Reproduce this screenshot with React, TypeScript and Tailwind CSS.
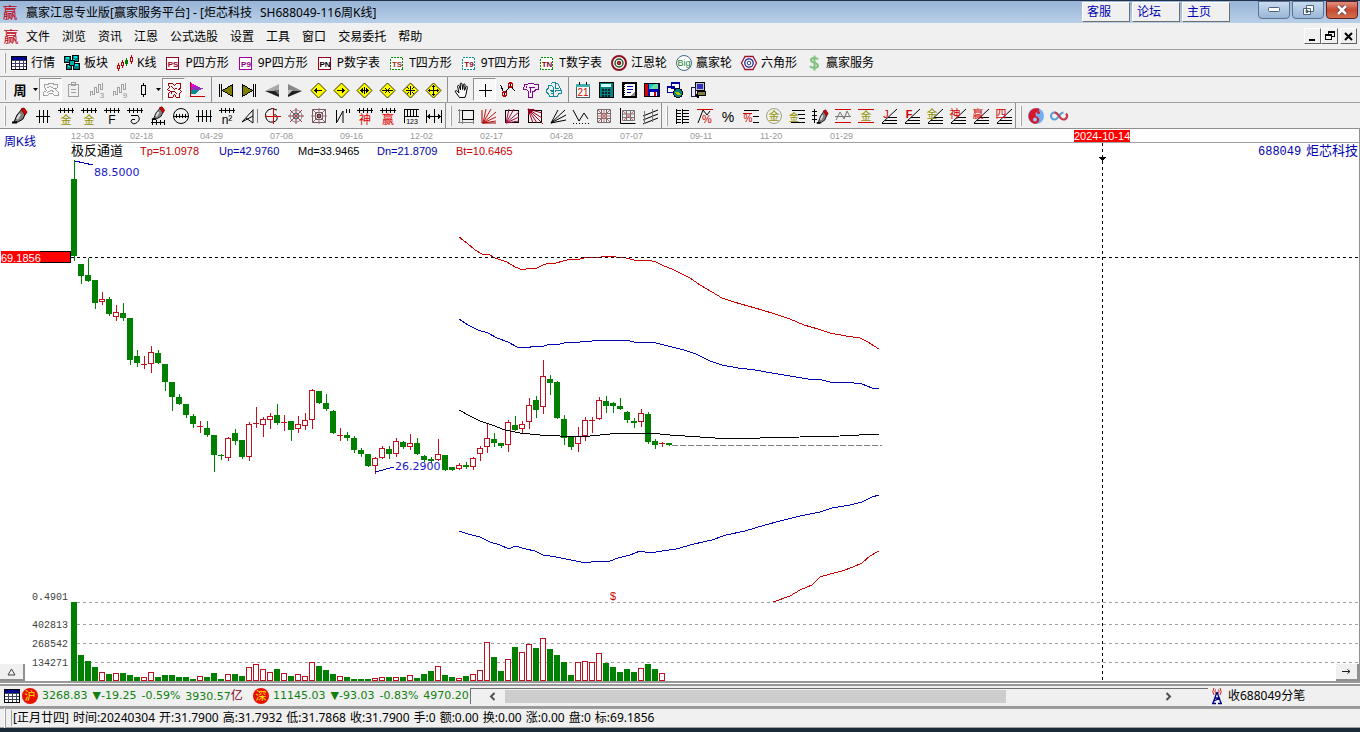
import type { ReactNode } from "react";
import clsx from "clsx";

const UI = "font-['Noto_Sans','Noto_Sans_CJK_SC',sans-serif]";

type Candle = [kind: "g" | "r", high: number, top: number, bottom: number, low: number, volume: number];

// pixel rows of each weekly candle, the last number is the top of its volume bar
const CANDLES: Candle[] = [
  ["g", 160, 179, 256, 260, 602], ["g", 264, 264, 276, 283, 655], ["g", 258, 275, 281, 281, 661], ["g", 280, 280, 303, 308, 667],
  ["r", 292, 299, 302, 304, 672], ["g", 297, 299, 314, 315, 674], ["r", 305, 312, 317, 320, 673], ["g", 303, 313, 318, 320, 673],
  ["g", 318, 318, 360, 364, 675], ["g", 350, 356, 363, 366, 677], ["r", 356, 364, 364, 368, 677], ["r", 346, 352, 364, 372, 672],
  ["g", 350, 353, 363, 363, 677], ["g", 364, 364, 382, 390, 675], ["g", 382, 382, 397, 410, 675], ["g", 394, 397, 404, 404, 677],
  ["g", 404, 404, 415, 417, 677], ["g", 414, 416, 424, 427, 679], ["r", 421, 426, 426, 432, 676], ["g", 421, 428, 435, 436, 677],
  ["g", 435, 435, 455, 471, 673], ["g", 454, 455, 455, 459, 679], ["r", 437, 438, 458, 460, 674], ["g", 429, 433, 441, 444, 674],
  ["g", 440, 440, 457, 458, 676], ["r", 422, 424, 457, 460, 667], ["r", 407, 423, 423, 427, 664], ["r", 417, 419, 425, 436, 669],
  ["r", 413, 416, 420, 428, 672], ["g", 404, 415, 423, 424, 669], ["r", 415, 422, 422, 430, 673], ["g", 421, 421, 430, 440, 676],
  ["r", 416, 424, 429, 432, 674], ["r", 413, 420, 426, 429, 676], ["r", 389, 390, 420, 428, 662], ["g", 391, 391, 403, 403, 666],
  ["g", 394, 403, 409, 410, 670], ["g", 410, 411, 433, 433, 674], ["r", 428, 435, 435, 440, 676], ["g", 432, 435, 438, 440, 677],
  ["g", 436, 438, 450, 452, 679], ["g", 448, 450, 454, 456, 679], ["g", 454, 454, 466, 466, 679], ["r", 457, 458, 466, 473, 678],
  ["r", 446, 448, 458, 458, 677], ["g", 446, 449, 454, 458, 677], ["r", 438, 441, 454, 456, 677], ["g", 441, 442, 447, 448, 677],
  ["r", 434, 443, 447, 449, 675], ["g", 438, 443, 454, 454, 678], ["g", 455, 456, 460, 461, 674], ["g", 457, 459, 461, 462, 671],
  ["r", 439, 454, 460, 460, 666], ["g", 455, 455, 470, 470, 675], ["g", 467, 467, 470, 470, 677], ["r", 463, 465, 469, 469, 678],
  ["g", 462, 465, 467, 468, 676], ["r", 457, 458, 467, 469, 674], ["r", 446, 448, 454, 460, 670], ["r", 423, 438, 447, 452, 642],
  ["g", 433, 439, 443, 446, 657], ["g", 443, 443, 446, 447, 671], ["r", 420, 422, 445, 451, 659], ["g", 416, 425, 430, 430, 647],
  ["r", 421, 424, 429, 433, 652], ["r", 398, 405, 422, 428, 644], ["g", 396, 400, 410, 417, 648], ["r", 360, 376, 407, 413, 638],
  ["g", 375, 379, 383, 394, 649], ["g", 381, 382, 418, 418, 655], ["g", 415, 419, 438, 444, 662], ["g", 436, 436, 447, 449, 675],
  ["r", 427, 436, 444, 451, 662], ["r", 417, 420, 436, 440, 661], ["r", 417, 420, 420, 432, 662], ["r", 397, 400, 419, 419, 653],
  ["g", 396, 401, 406, 412, 663], ["g", 402, 403, 406, 412, 667], ["g", 398, 406, 409, 409, 672], ["g", 411, 412, 420, 422, 669],
  ["g", 418, 421, 423, 427, 672], ["r", 409, 413, 422, 426, 668], ["g", 412, 414, 442, 443, 664], ["g", 439, 441, 445, 448, 669],
  ["r", 442, 443, 443, 446, 673], ["g", 443, 443, 445, 445, 680],
];

const DATES = ["12-03", "02-18", "04-29", "07-08", "09-16", "12-02", "02-17", "04-28", "07-07", "09-11", "11-20", "01-29"];

const BANDS = [
  { color: "#c80000", points: "459,237 467,243 475,250 482,254 488,254 495,258 501,260 507,262 515,267 523,270 529,268 535,269 541,266 548,263 556,263 563,261 571,259 580,259 588,257 597,258 606,256 616,257 626,258 634,260 648,260 656,262 664,266 672,269 680,273 690,278 700,285 712,292 722,298 734,302 748,306 762,310 775,314 790,319 804,325 818,329 830,333 846,336 860,338 868,342 874,346 879,349" },
  { color: "#0000b0", points: "459,319 468,325 478,330 488,333 497,338 508,342 517,347 526,348 535,346 541,347 550,344 560,344 568,342 580,342 592,341 604,340 626,340 634,342 644,343 652,342 668,346 684,350 696,354 710,361 722,365 738,368 755,370 772,373 790,376 808,379 818,379 830,382 846,382 862,384 872,388 879,389" },
  { color: "#000000", points: "459,410 470,416 480,421 492,425 505,430 520,433 540,435 560,436 590,436 610,434 630,433 650,433 670,435 700,437 730,439 760,438 800,437 840,436 879,434" },
  { color: "#0000b0", points: "459,531 468,534 480,537 490,542 500,545 509,549 515,546 526,549 535,551 543,555 556,557 566,559 576,561 586,563 597,561 610,561 618,558 630,555 640,551 650,553 662,551 676,549 694,544 712,540 726,535 745,531 765,525 780,521 800,516 820,512 832,508 850,505 862,502 872,497 879,495" },
  { color: "#c80000", points: "773,602 790,596 800,590 812,585 820,577 830,574 842,571 853,567 862,563 870,556 879,551" },
];

function Svg({ children, smooth }: { children: ReactNode; smooth?: boolean }) {
  return (
    <svg width="18" height="18" viewBox="0 0 18 18" fill="none" stroke="#000" strokeWidth="1" shapeRendering={smooth ? "auto" : "crispEdges"} className="shrink-0 overflow-visible" aria-hidden="true">
      {children}
    </svg>
  );
}

function Glyph({ x, y, size, color, children, bold }: { x: number; y: number; size: number; color: string; children: string; bold?: boolean }) {
  return (
    <text x={x} y={y} fontSize={size} fill={color} stroke="none" textAnchor="middle" fontWeight={bold ? 700 : 400} fontFamily="'Liberation Sans','Noto Sans CJK SC',sans-serif">
      {children}
    </text>
  );
}

const TableIcon = () => (
  <Svg>
    <rect x="1" y="2" width="16" height="14" fill="#fff" stroke="none" />
    <rect x="1" y="2" width="16" height="4" fill="#000090" stroke="none" />
    <path d="M1.5 2.5h15v13h-15z" />
    <path d="M2 6.5h14 M2 9.5h14 M2 12.5h14 M5.5 6v9 M9.5 6v9 M13.5 6v9" stroke="#404060" />
  </Svg>
);

const BlocksIcon = () => (
  <Svg>
    <path d="M1.5 2.5h6v6h-6z M9.5 1.5h6v6h-6z M3.5 10.5h5v5h-5z M10.5 9.5h6v6h-6z" fill="#008080" />
    <path d="M3 4h3 M11 3h3 M5 12h2 M12 11h3 M3 6v1 M11 5v1" stroke="#00e8e8" strokeWidth="2" />
    <path d="M6.5 6.5h5v5h-5z" fill="#00b0b0" />
  </Svg>
);

const KLineIcon = () => (
  <Svg>
    <path d="M2.5 9v8 M6.5 6v8" stroke="#c00000" />
    <path d="M10.5 4v8" stroke="#008000" />
    <path d="M15.5 1v9" stroke="#c00000" />
    <path d="M1.5 11.5h2v3h-2z M5.5 8.5h2v3h-2z M14.5 3.5h2v4h-2z" fill="#f0f0f0" stroke="#c00000" />
    <path d="M9.5 6.5h2v3h-2z" fill="#008000" stroke="#008000" />
  </Svg>
);

function SquareIcon({ label, color, ink, dashed }: { label: string; color: string; ink: string; dashed?: boolean }) {
  return (
    <Svg>
      <rect x="2.5" y="3.5" width="12" height="12" fill="#fff" stroke={color} strokeDasharray={dashed ? "2 1" : undefined} />
      <Glyph x={9} y={13} size={8} color={ink} bold>{label}</Glyph>
    </Svg>
  );
}

const GannWheelIcon = () => (
  <Svg smooth>
    <circle cx="9" cy="9" r="7" fill="#fff" stroke="#901020" strokeWidth="2" />
    <circle cx="9" cy="9" r="4" stroke="#206030" strokeWidth="1.5" />
    <circle cx="9" cy="9" r="1.8" fill="#c03030" stroke="#601010" />
  </Svg>
);

const BigWheelIcon = () => (
  <Svg smooth>
    <circle cx="9" cy="9" r="7.5" fill="#fff" stroke="#406888" />
    <Glyph x={9} y={12} size={9} color="#108030">Big</Glyph>
  </Svg>
);

const HexIcon = () => (
  <Svg smooth>
    <path d="M5 2.5h8L16.5 9 13 15.5H5L1.5 9z" fill="#fff" stroke="#a01030" strokeWidth="1.3" />
    <circle cx="9" cy="9" r="4.2" stroke="#202090" strokeWidth="1.3" />
    <circle cx="9" cy="9" r="1.8" stroke="#2040a0" />
  </Svg>
);

const DollarIcon = () => (
  <Svg smooth>
    <path d="M13 5.5C12 3.5 6 3.2 6 6.2c0 3 7 2 7 5.4 0 3-6.5 3-8 .4 M9.5 1.5v15" stroke="#80c080" strokeWidth="2" />
  </Svg>
);

const QUICK: { label: string; icon: ReactNode }[] = [
  { label: "行情", icon: <TableIcon /> },
  { label: "板块", icon: <BlocksIcon /> },
  { label: "K线", icon: <KLineIcon /> },
  { label: "P四方形", icon: <SquareIcon label="PS" color="#900020" ink="#a00020" /> },
  { label: "9P四方形", icon: <SquareIcon label="P9" color="#a000a0" ink="#900080" /> },
  { label: "P数字表", icon: <SquareIcon label="PN" color="#a00020" ink="#000" /> },
  { label: "T四方形", icon: <SquareIcon label="TS" color="#009000" ink="#a03020" dashed /> },
  { label: "9T四方形", icon: <SquareIcon label="T9" color="#009090" ink="#900020" dashed /> },
  { label: "T数字表", icon: <SquareIcon label="TN" color="#009000" ink="#900020" dashed /> },
  { label: "江恩轮", icon: <GannWheelIcon /> },
  { label: "赢家轮", icon: <BigWheelIcon /> },
  { label: "六角形", icon: <HexIcon /> },
  { label: "赢家服务", icon: <DollarIcon /> },
];

function Diamond({ d }: { d: string }) {
  return (
    <Svg>
      <path d="M9.5 2L17 9.5 9.5 17 2 9.5z" fill="#ffff00" stroke="#303000" shapeRendering="auto" />
      <path d={d} />
    </Svg>
  );
}

function Wave({ n }: { n: string }) {
  return (
    <Svg>
      <path d="M2.5 15v-5h2v3h2v-7h2v5h2V3h2v5h2V2" stroke="#a0a0a0" />
      <Glyph x={14} y={17} size={8} color="#909090">{n}</Glyph>
    </Svg>
  );
}

const ICONS: Record<string, ReactNode> = {
  week: <Svg><Glyph x={9} y={14} size={13} color="#000" bold>周</Glyph></Svg>,
  region: <Svg><path d="M2.5 3.5h3l2-1h3l2 1h3v3l-2 2 3 3v3h-4l-2-2h-3l-2 2h-4v-3l3-2-2-3z M5.5 6.5l3-1 3 2h2 M5.5 11.5l3-2 4 1" stroke="#a0a0a0" /></Svg>,
  clip: <Svg><path d="M3.5 3.5h10v12h-10z M6.5 1.5h4v3h-4z M6 8.5h5 M6 11.5h5" stroke="#a0a0a0" /></Svg>,
  wave3: <Wave n="3" />,
  wave9: <Wave n="9" />,
  candle: <Svg><path d="M9.5 2v14" /><rect x="7.5" y="4.5" width="4" height="9" fill="#f0f0f0" /></Svg>,
  pattern: <Svg><path d="M3.5 2.5h4l2 2 2-2h4v4l-1 2 2 2-2 2v4h-3l-2-3-2 3h-4v-4l2-2-3-2 2-2z M6.5 5.5l3 3 3-2 M6.5 12.5v-2h3l3 3 M12.5 8.5h2" stroke="#a00000" /></Svg>,
  profile: (
    <Svg>
      <path d="M3 2l8 4H3z" fill="#e000e0" stroke="none" />
      <path d="M3 6h7l6 2-6 1H3z" fill="#9030c0" stroke="none" />
      <path d="M3 9h8l-4 4H3z" fill="#009090" stroke="none" />
      <path d="M2.5 1v15 M2 15.5h15" stroke="#c00000" />
    </Svg>
  ),
  first: <Svg><path d="M2.5 3v13 M4.5 3v13" /><path d="M15.5 3.5v12l-10-6z" fill="#808000" /></Svg>,
  last: <Svg><path d="M13.5 3v13 M15.5 3v13" /><path d="M2.5 3.5v12l10-6z" fill="#808000" /></Svg>,
  prev: <Svg smooth><path d="M16 3v7H2z" fill="#a8a8a8" stroke="none" /><path d="M16 16v-6H2z" fill="#202020" stroke="none" /><path d="M11 9h5v5z" fill="#707070" stroke="none" /></Svg>,
  next: <Svg smooth><path d="M2 3v7h14z" fill="#888" stroke="none" /><path d="M2 16v-6h14z" fill="#202020" stroke="none" /><path d="M2 9h5l-5 5z" fill="#c0c0c0" stroke="none" /></Svg>,
  dLeft: <Diamond d="M5 9.5h8 M7.5 7v5 M6.5 8v3" />,
  dRight: <Diamond d="M5 9.5h8 M10.5 7v5 M11.5 8v3" />,
  dWide: <Diamond d="M5 9.5h9 M6.5 8v3 M12.5 8v3 M7.5 7v5 M11.5 7v5 M9.5 6v7" />,
  dNarrow: <Diamond d="M4 9.5h11 M8.5 8v3 M10.5 8v3 M7.5 7v1 M11.5 7v1 M7.5 11v1 M11.5 11v1" />,
  dAll: <Diamond d="M5 9.5h9 M9.5 5v9 M7.5 7v1 M11.5 7v1 M7.5 11v1 M11.5 11v1 M6.5 6v1 M12.5 6v1 M6.5 12v1 M12.5 12v1" />,
  dCross: <Diamond d="M4 9.5h11 M9.5 4v11 M8 5.5h3 M8 13.5h3 M5.5 8v3 M13.5 8v3" />,
  hand: <Svg smooth><path d="M6.500 16.500L2.500 11c-.8-1.300.8-2 1.600-1L6 12 4.600 5.500c-.2-1.500 1.300-1.500 1.700-.3L7.500 9 7.300 3c0-1.300 1.500-1.300 1.700 0l.7 5.500.8-5c.2-1 1.600-.9 1.500.4l-.4 5.400 1.400-3.500c.5-1 1.700-.6 1.400.6l-1.400 7-1 3z" fill="#fff" /></Svg>,
  cross: <Svg><path d="M9.5 3v13 M3 9.5h13" /></Svg>,
  link: <Svg><path d="M1.5 4l4 9 6-9 4 6" /><circle cx="5.5" cy="13" r="2" stroke="#c00000" strokeWidth="1.5" /><circle cx="11.5" cy="4" r="2" stroke="#c00000" strokeWidth="1.5" /></Svg>,
  hammer: <Svg><path d="M2.5 3.5h3l1-1h5l1 1h4v5h-3l-1 2h-2v6h-4v-6l-2-2h-3z M6.5 6.5h6 M8.5 6v6 M4.5 5v2" stroke="#800090" /></Svg>,
  brain: <Svg><path d="M5.5 3.5l2-2h3l3 2 1 3 2 3v3h-3l-1 3h-4v-5h-3 M8.5 15.5h-4l-1-3-2-1v-3l2-1v-3h3l2 2v5 M10.5 2v5h3 M10.5 11v-2h5 M4.500 9.500h3 M5.500 12.500h3" stroke="#108898" /></Svg>,
  calendar: <Svg><rect x="2.5" y="3.5" width="13" height="13" fill="#fff" stroke="#406060" /><path d="M2 4.500h14" stroke="#40b0b0" strokeWidth="3" /><path d="M5.500 1v3 M12.500 1v3" /><Glyph x={9} y={15} size={10} color="#d00000">21</Glyph></Svg>,
  calc: <Svg><rect x="2.5" y="1.5" width="14" height="15" fill="#008080" /><path d="M4 4.5h10" stroke="#d0ffff" strokeWidth="3" /><path d="M5 8.5h9 M5 11.5h9 M5 14.5h9" strokeWidth="2" strokeDasharray="2 1" stroke="#002020" /></Svg>,
  notes: <Svg><rect x="3" y="2" width="13" height="14" fill="#fff" strokeWidth="2" /><path d="M7 5.5h6 M7 8.5h6 M7 11.5h4" stroke="#0000a0" /><path d="M4.5 3v12" strokeDasharray="1 1" /><path d="M10 15l5-5v5z" fill="#909090" stroke="none" /></Svg>,
  save: <Svg><path d="M1.5 2.5h15v13h-15z" fill="#0000b0" /><path d="M2 3h3v12H2z" fill="#e00000" stroke="none" /><path d="M6 3h9v5H6z" fill="#20c0c0" stroke="none" /><path d="M6 8l5-5h4v5z" fill="#60e0a0" stroke="none" /><path d="M7 11h7v4H7z" fill="#fff" stroke="none" /><path d="M11 11h2v4h-2z" fill="#d00000" stroke="none" /></Svg>,
  globe: <Svg><path d="M5.5 1.5h8v6h-8z M1.5 5.5h7v6h-7z" fill="#fff" stroke="#0000a0" /><path d="M5 2.5h9 M1 6.5h8" stroke="#0000a0" /><circle cx="12" cy="12" r="4.5" fill="#008080" /><path d="M9 11h4l2 3h-4z" fill="#c0c000" stroke="none" /></Svg>,
  computer: <Svg><rect x="6.5" y="1.5" width="9" height="8" fill="#c0c0c0" /><path d="M8 3h6v5H8z" fill="#3030c0" stroke="none" /><path d="M8.5 10.5h8v4h-8z" fill="#808040" /><path d="M2.5 6.5h4v9h-4z" fill="#e8e8ff" stroke="#202040" /><path d="M7 14l3 3" strokeWidth="2" /></Svg>,
};

const PEN = (
  <>
    <path d="M3 15l3-7 5-6 4 3-3 7-5 3z" fill="#808080" stroke="#000" />
    <path d="M6 12l3-5" stroke="#e0e0e0" strokeWidth="2" />
    <path d="M10 2l3-1 3 4-2 3z" fill="#e00000" stroke="#800000" />
    <path d="M1 15.5h5" strokeWidth="2" />
  </>
);
const COMB = "M1 3.5h16 M3.500 1v5 M7.500 1v5 M11.500 1v5 M15.500 1v5";
const RAYS = "M3 16L6 2 M3 16L11 2 M3 16L16 5 M3 16L16 10 M3 16L16 14";

function Comb({ text, color, size = 11 }: { text: string; color: string; size?: number }) {
  return <Svg><path d={COMB} /><Glyph x={9} y={17} size={size} color={color}>{text}</Glyph></Svg>;
}

function FanMark({ text, color, bold }: { text: string; color: string; bold?: boolean }) {
  return (
    <Svg>
      <path d="M2 16.5h15 M5 13.5h12 M8 10.500h9" />
      <path d="M2 16L17 2" shapeRendering="auto" />
      <Glyph x={6} y={11} size={11} color={color} bold={bold}>{text}</Glyph>
    </Svg>
  );
}

const DRAW_1: ReactNode[] = [
  <Svg smooth>{PEN}</Svg>,
  <Svg><path d="M2 9.5h14 M5.5 3v13 M9.5 3v13 M13.5 3v13" /></Svg>,
  <Comb text="金" color="#909000" />,
  <Comb text="金" color="#909000" />,
  <Comb text="F" color="#000" size={12} />,
  <Svg><path d={COMB} /><path d="M5 8.5h7q3 4-1 7t-6-1q0-3 4-2" shapeRendering="auto" /></Svg>,
  <Svg smooth><g transform="translate(2 -1) scale(.85)">{PEN}</g><path d="M2 15.5h14 M3.5 13v5 M7.5 13v5 M11.5 13v5 M15.5 13v5" /></Svg>,
  <Svg smooth><circle cx="9" cy="9" r="7.5" /><path d="M1 9.5h16 M4.5 7v4 M7.5 7v4 M10.5 7v4 M13.5 7v4" /></Svg>,
  <Svg><path d="M1 9.5h16 M3.5 3v12 M7.5 3v12 M11.5 3v12 M15.5 3v12" /></Svg>,
  <Comb text="n²" color="#000" size={12} />,
  <Svg><path d="M1 15L12 3v12M1 15l11-6 M5 11l7 5" shapeRendering="auto" /><path d="M12.5 2v14 M16.5 2v14" stroke="#808080" /></Svg>,
  <Svg smooth><path d="M9 9q3-3 4 1t-4 5-7-4 2-8 9 0" /><path d="M1 9.5h16 M9.5 1v16" stroke="#d00000" /></Svg>,
  <Svg smooth><circle cx="9" cy="9" r="6" stroke="#888" /><circle cx="9" cy="9" r="3" stroke="#208080" /><path d="M1 9h16 M9 1v16 M3 3l12 12 M15 3L3 15" stroke="#a04050" /></Svg>,
  <Svg smooth><path d="M2.5 2.5h13v13h-13z M5.5 5.5h7v7h-7z" stroke="#606060" /><path d="M1 9h16 M9 1v16 M2 2l14 14 M16 2L2 16" stroke="#b06070" /><rect x="7.5" y="7.5" width="3" height="3" stroke="#404040" /></Svg>,
  <Svg><path d="M3.5 3v13 M4 15l6-11v12 M13.5 2v4 M16.5 2v4" shapeRendering="auto" /></Svg>,
  <Comb text="神" color="#e00000" size={12} />,
  <Comb text="赢" color="#e00000" size={12} />,
  <Svg><path d="M2.5 16V2h14 M2 9.5h15 M5.5 2v7 M8.5 2v7 M11.5 2v7 M14.5 2v7" /><Glyph x={10} y={17} size={7} color="#000">123</Glyph></Svg>,
  <Svg><path d="M1.5 3v13 M16.5 3v13 M2 9.5h14 M9.5 2v14 M3.5 8v3 M4.5 7v5 M14.5 8v3 M13.5 7v5" /></Svg>,
];

const DRAW_2: ReactNode[] = [
  <Svg><rect x="5.5" y="3.5" width="11" height="9" /><path d="M2.5 2v14 M1 3.5h4 M1 15.5h16 M5.5 13v4 M16.5 13v4" stroke="#808080" /></Svg>,
  <Svg smooth><path d={RAYS} stroke="#c01010" /><path d="M2 3v13h14" stroke="#900" /></Svg>,
  <Svg smooth><rect x="2.5" y="3.5" width="13" height="12" /><path d={RAYS} stroke="#a01040" /></Svg>,
  <Svg smooth><rect x="2.5" y="3.5" width="13" height="12" /><path d="M2 2l5 14 M2 2l9 14 M2 2l15 15 M2 2l14 9 M2 2l14 4" stroke="#a00020" /><path d="M2 2h7L2 8z" fill="#900020" stroke="none" /></Svg>,
  <Svg smooth><path d="M2 16L9 3 M2 16L16 3 M2 16L17 8 M2 16L17 13" /></Svg>,
  <Svg><path d="M1 3l6 11 5-8 4 6" shapeRendering="auto" /><path d="M1 16.5h16" strokeDasharray="1 2" /></Svg>,
  <Svg smooth><path d="M2.5 2.5h13v13h-13z M2 6.5h14 M2 11.5h14 M6.5 2v14 M11.5 2v14" stroke="#707070" /><path d="M3 3l12 12 M15 3L3 15 M9 2v14 M2 9h14" stroke="#c07070" /></Svg>,
  <Svg smooth><path d="M4.5 3.5h12v10h-12z M4 7h12 M4 10.5h12 M8.5 3v11 M12.5 3v11" stroke="#707070" /><path d="M5 4l11 10 M16 4L5 14" stroke="#c07070" /><path d="M2.5 1v15.5h15" /></Svg>,
  <Svg smooth><path d="M2 9l15-6 M2 13l15-6 M2 17l15-6" /><path d="M3.5 4v13 M11.5 2v13" stroke="#777" /></Svg>,
];

const DRAW_3: ReactNode[] = [
  <Svg><path d="M3.5 2v15 M9.5 2v15 M3 3.5h5 M3 6.5h5 M3 9.5h5 M3 12.5h5 M3 15.5h5 M10 3.5h6 M10 6.5h6 M10 9.5h6 M10 12.5h6 M10 15.5h6" /></Svg>,
  <Svg><path d="M1 2.5h16" stroke="#d00000" /><path d="M2 16l5-13 4 5 3-4" shapeRendering="auto" /><Glyph x={11} y={16} size={11} color="#d00000">%</Glyph></Svg>,
  <Svg><Glyph x={9} y={15} size={14} color="#000">%</Glyph></Svg>,
  <Svg><path d="M2 3.5h15 M11 9.5h6 M11 15.5h6" /><path d="M1 6.5h9" stroke="#d00000" /><Glyph x={6} y={15} size={10} color="#d00000">%</Glyph></Svg>,
  <Svg smooth><circle cx="9" cy="9" r="7.5" stroke="#a0a080" /><Glyph x={9} y={13} size={11} color="#909000">金</Glyph></Svg>,
  <Svg><path d="M4 3.5h13 M10 7.5h7 M11 11.5h6 M3 15.5h14" /><Glyph x={6} y={14} size={10} color="#909000">金</Glyph></Svg>,
  <Svg smooth><g transform="translate(5 2) scale(.75 .9)">{PEN}</g><path d="M3.5 2v14 M1 4.5h5 M1 8.5h5 M1 12.5h5" /></Svg>,
  <Svg><path d="M1 2.5h16 M1 15.5h16" stroke="#d00000" /><path d="M1 9.5h16 M2 13l4-8 4 7 3-8 3 6" stroke="#777" shapeRendering="auto" /></Svg>,
  <Svg><path d="M1 2.5h16 M1 15.5h16" stroke="#d00000" /><Glyph x={9} y={13} size={11} color="#909000">金</Glyph></Svg>,
  <FanMark text="J" color="#d00000" />,
  <FanMark text="F" color="#d00000" bold />,
  <FanMark text="金" color="#909000" />,
  <FanMark text="神" color="#d00000" />,
  <FanMark text="赢" color="#d00000" />,
  <FanMark text="四" color="#d00000" />,
];

const DRAW_4: ReactNode[] = [
  <Svg smooth><circle cx="9" cy="9" r="8" fill="#70b0f0" stroke="none" /><path d="M12 1.600A8 8 0 1 0 7 16.800C11 17 13 14 12 11.500S8 10 8.500 7s5-2 3.500-5.400z" fill="#d81828" stroke="none" /><circle cx="8" cy="12.500" r="2" fill="#90c8ff" stroke="none" /><circle cx="11.500" cy="5.500" r="1.500" fill="#d81828" stroke="none" /></Svg>,
  <Svg smooth><path d="M9 9c-2-3-3-3.500-4.500-3.500a3.500 3.500 0 0 0 0 7C6 12.500 7 12 9 9s3-3.500 4.500-3.500" stroke="#60a0d8" strokeWidth="2.200" /><path d="M4.500 5.500C6 5.500 7 6 9 9s3 3.500 4.500 3.500a3.500 3.500 0 0 0 2.500-6" stroke="#c83848" strokeWidth="2.200" /></Svg>,
];

function ToolButton({ children, name, pressed }: { children: ReactNode; name: string; pressed?: boolean }) {
  return (
    <button aria-label={name} className={clsx("flex h-[23px] w-[23px] shrink-0 items-center justify-center border", pressed ? "border-white border-l-[#909090] border-t-[#909090] bg-[#f8f8f8]" : "border-transparent")}>
      {children}
    </button>
  );
}

function Grip() {
  return <div className="ml-1 mr-[2px] h-5 w-[2px] shrink-0 border-r border-[#a0a0a0] bg-white" />;
}

function Sep() {
  return <div className="flex h-full w-1.5 shrink-0 justify-center"><div className="w-px bg-[#909090]" /></div>;
}

function Tools({ names, pressed }: { names: string[]; pressed?: string }) {
  return names.map((n) => <ToolButton key={n} name={n} pressed={n === pressed}>{ICONS[n]}</ToolButton>);
}

function DrawGroup({ icons, label, last }: { icons: ReactNode[]; label: string; last?: boolean }) {
  return (
    <div className="flex h-full items-center">
      <Grip />
      {icons.map((icon, i) => <ToolButton key={i} name={`${label} ${i + 1}`}>{icon}</ToolButton>)}
      {!last && <div className="h-full w-px bg-[#909090]" />}
    </div>
  );
}

const Caret = () => (
  <button aria-label="展开" className="flex w-2 shrink-0 items-center justify-center">
    <svg width="5" height="3" viewBox="0 0 5 3"><path d="M0 0h5L2.5 3z" /></svg>
  </button>
);

function Logo() {
  return <span className="w-4 shrink-0 text-center text-[15px] leading-none text-[#c00010]">赢</span>;
}

function TitleBar() {
  const win = "flex h-[18px] w-8 items-center justify-center rounded-b-sm border border-[#5a7390] bg-linear-to-b from-[#c8daee] to-[#9ab6d6]";
  return (
    <header className="flex h-[23px] items-center border-t border-[#22304a] bg-linear-to-b from-[#98b4d6] to-[#b8cfe8] px-[2px]">
      <Logo />
      <h1 className="ml-2 flex flex-1 gap-2 whitespace-nowrap pt-[2px] text-xs">
        <span>赢家江恩专业版[赢家服务平台] - [炬芯科技</span>
        <span>SH688049-116周K线]</span>
      </h1>
      <nav className="mr-7 flex gap-[2px]">
        {["客服", "论坛", "主页"].map((t) => (
          <a key={t} href="#" className="h-5 w-12 border border-white border-b-[#707070] border-r-[#707070] bg-[#f0f0f0] pl-1 text-xs leading-[18px] text-[#0000b0]">{t}</a>
        ))}
      </nav>
      <div className="flex gap-[2px] self-start">
        <button aria-label="最小化" className={win}>
          <svg width="12" height="6"><rect x=".5" y=".5" width="11" height="4" rx="1" fill="#fff" stroke="#50617a" /></svg>
        </button>
        <button aria-label="还原" className={win}>
          <svg width="13" height="12" fill="#fff" stroke="#50617a"><path d="M4.5 1.5h7v6h-7z M1.5 4.5h7v6h-7z M4 6.5h2v2H4z" /></svg>
        </button>
        <button aria-label="关闭" className="flex h-[18px] w-8 items-center justify-center rounded-b-sm border border-[#602020] bg-linear-to-b from-[#e09080] via-[#c84830] to-[#d07050]">
          <svg width="12" height="10"><path d="M2 1l8 8 M10 1L2 9" stroke="#50303a" strokeWidth="4" /><path d="M2 1l8 8 M10 1L2 9" stroke="#fff" strokeWidth="2.5" /></svg>
        </button>
      </div>
    </header>
  );
}

function MenuBar() {
  const menus = ["文件", "浏览", "资讯", "江恩", "公式选股", "设置", "工具", "窗口", "交易委托", "帮助"];
  const btn = "flex h-4 w-[17px] items-center justify-center border border-white border-b-[#606060] border-r-[#606060] bg-[#f0f0f0]";
  return (
    <div className="flex h-[27px] items-center border-b border-[#a0a0a0] px-[3px]">
      <Logo />
      <nav className="ml-[7px] flex flex-1 gap-3 pt-[2px]">
        {menus.map((m) => <button key={m} className="shrink-0 text-xs">{m}</button>)}
      </nav>
      <button aria-label="最小化窗口" className={btn}><svg width="9" height="9"><path d="M1 8h6" stroke="#000" strokeWidth="2" /></svg></button>
      <button aria-label="还原窗口" className={clsx(btn, "mr-[2px]")}>
        <svg width="10" height="10" fill="none" stroke="#000" shapeRendering="crispEdges"><path d="M3.5 3V.5h6v5H7 M3 1.5h7 M.5 3.5h6v5h-6z M0 4.5h7" /></svg>
      </button>
      <button aria-label="关闭窗口" className={btn}><svg width="9" height="9"><path d="M1 1l7 7 M8 1L1 8" stroke="#000" strokeWidth="2" /></svg></button>
    </div>
  );
}

function Chart() {
  return (
    <main className="relative border-r border-[#909090] bg-white">
      <svg viewBox="0 129 1359 552" className="block h-auto w-full" shapeRendering="crispEdges" fontFamily="'Liberation Sans','Noto Sans CJK SC',sans-serif" fontSize="11">
        <path d="M71 142.5H1359" stroke="#a0a0a0" />
        <g fill="#999" fontSize="9">
          {DATES.map((d, i) => <text key={i} x={i === 0 ? 71 : 60 + i * 70} y="139">{d}</text>)}
        </g>
        <text x="4" y="146" fontSize="12" fill="#0000b0">周K线</text>
        <text x="71" y="155" fontSize="13">极反通道</text>
        <text x="140" y="155" fill="#c80000">Tp=51.0978</text>
        <text x="219" y="155" fill="#0000b0">Up=42.9760</text>
        <text x="298" y="155">Md=33.9465</text>
        <text x="377" y="155" fill="#0000b0">Dn=21.8709</text>
        <text x="456" y="155" fill="#c80000">Bt=10.6465</text>
        <text x="1258" y="155" fontSize="12" fontFamily="'Liberation Mono',monospace" fill="#0000b0">688049</text>
        <text x="1306" y="155" fontSize="13" fill="#0000b0">炬芯科技</text>

        <g stroke="#a0a0a0" strokeDasharray="3 3">
          <path d="M77 602.5H1359" />
          <path d="M77 624.5H1359" />
          <path d="M77 643.5H1359" />
          <path d="M77 662.5H1359" />
        </g>
        <g fill="#404040" fontSize="10" fontFamily="'Liberation Mono',monospace" textAnchor="end">
          <text x="68" y="600">0.4901</text>
          <text x="68" y="628">402813</text>
          <text x="68" y="647">268542</text>
          <text x="68" y="666">134271</text>
        </g>

        {CANDLES.map(([kind, high, top, bottom, low, vol], i) => {
          const x = 71 + i * 7;
          const flat = top === bottom;
          const color = kind === "g" ? "#008000" : "#c01020";
          const fill = kind === "g" ? color : "#fff";
          return (
            <g key={i} stroke={color} fill={fill}>
              <path d={`M${x + 3.5} ${high}V${low + 1}`} />
              {flat ? <path d={`M${x} ${top + 0.5}h6`} /> : <rect x={x + 0.5} y={top + 0.5} width="5" height={bottom - top - 1} />}
              <rect x={x + 0.5} y={vol + 0.5} width="5" height={681 - vol - 1} />
            </g>
          );
        })}

        <g fill="none">
          {BANDS.map((b, i) => <polyline key={i} points={b.points} stroke={b.color} />)}
          <path d="M672 445.5H882" stroke="#808080" strokeDasharray="6 2" />
          <path d="M75 161l18 4 M375 472l19-5" stroke="#0000b0" />
        </g>
        <g fill="#1818c8" fontFamily="'DejaVu Sans',sans-serif">
          <text x="94" y="176">88.5000</text>
          <text x="395" y="470">26.2900</text>
        </g>
        <text x="610" y="600" fill="#d00000">$</text>

        <path d="M71 257.5H1359" stroke="#000" strokeDasharray="3 3" />
        <path d="M1102.5 143V681" stroke="#000" strokeDasharray="3 3" />
        <path d="M1099 157h7l-3.5 4z" />
        <rect x="1.5" y="251.5" width="69" height="11" fill="#f00" stroke="#000" />
        <path d="M1 251h39v12H1z" fill="#f00" />
        <text x="1" y="262" fill="#fff">69.1856</text>
        <path d="M1074 130h56v12h-56z" fill="#f00" />
        <text x="1074" y="140" fill="#fff">2024-10-14</text>
      </svg>
      <button className="absolute bottom-0 left-0 flex h-[17px] w-[25px] items-center justify-center border-b-2 border-r-2 border-[#909090] bg-[#f0f0f0]" aria-label="上移">
        <svg width="9" height="8" fill="none" stroke="#404040"><path d="M4.5 1l3.5 6H1z" /></svg>
      </button>
      <button className="absolute bottom-0 right-0 flex h-[17px] w-[23px] items-center justify-center border-b-2 border-r-2 border-[#909090] bg-[#f0f0f0]" aria-label="右移">
        <svg width="9" height="7" stroke="#202020" fill="none"><path d="M0 3.5h8 M5.5 1.5l2.5 2-2.5 2" /></svg>
      </button>
    </main>
  );
}

function Badge({ children }: { children: string }) {
  return <span className="flex h-4 w-4 shrink-0 items-center justify-center rounded-full bg-[#e81000] text-[11px] leading-none text-[#ffe800]">{children}</span>;
}

function QuoteBar() {
  return (
    <div className="flex h-6 items-center border-y-2 border-[#999] bg-[#f0f0f0]">
      <div className="flex w-[470px] shrink-0 items-center overflow-hidden whitespace-nowrap pl-[3px] font-['DejaVu_Sans','Noto_Sans_CJK_SC',sans-serif] text-[11px] leading-4 text-[#108010]">
        <TableIcon />
        <span className="ml-px"><Badge>沪</Badge></span>
        <div className="ml-1 flex w-[211px] shrink-0 gap-[5px]">
          <span>3268.83</span>
          <span>▼-19.25</span>
          <span>-0.59%</span>
          <span>3930.57<span className="text-xs leading-4 text-[#800020]">亿</span></span>
        </div>
        <Badge>深</Badge>
        <div className="ml-1 flex gap-[5px]">
          <span>11145.03</span>
          <span>▼-93.03</span>
          <span>-0.83%</span>
          <span>4970.20</span>
        </div>
      </div>
      <div className="flex h-4 flex-1 items-center border-l border-t border-[#707070] pr-7">
        <button aria-label="向左滚动" className="flex w-[34px] justify-center pl-2">
          <svg width="7" height="9" fill="none" stroke="#505050" strokeWidth="2"><path d="M5.5 1L2 4.5 5.5 8" /></svg>
        </button>
        <div className="h-[13px] flex-1"><div className="h-full w-[77%] bg-[#cdcdcd]" /></div>
        <button aria-label="向右滚动" className="flex w-6 justify-center">
          <svg width="7" height="9" fill="none" stroke="#505050" strokeWidth="2"><path d="M1.5 1L5 4.500 1.500 8" /></svg>
        </button>
      </div>
      <div className="flex w-[152px] shrink-0 items-center gap-[2px] text-xs">
        <svg width="18" height="18" viewBox="0 0 18 18" fill="none" stroke="#d02020">
          <path d="M6 8Q3.5 5 6 1 M12 8q2.5-3 0-7 M7.5 6.5q-1-2 0-4 M10.5 6.5q1-2 0-4" />
          <path d="M9 5L5 16 M9 5l4 11 M7 11h4 M4 16.5h4 M10 16.5h4 M6 14l6-3" stroke="#000080" strokeWidth="1.3" />
        </svg>
        收688049分笔
      </div>
    </div>
  );
}

function InfoBar() {
  const fields = ["[正月廿四]", "时间:20240304", "开:31.7900", "高:31.7932", "低:31.7868", "收:31.7900", "手:0", "额:0.00", "换:0.00", "涨:0.00", "盘:0", "标:69.1856"];
  return (
    <div className="flex h-5 items-center border-y border-[#a0a0a0] bg-[#f0f0f0]">
      <Grip />
      <div className="ml-[3px] flex flex-1 gap-1 whitespace-nowrap border-l border-[#a0a0a0] pl-px text-xs leading-4">
        {fields.map((f) => <span key={f}>{f}</span>)}
      </div>
    </div>
  );
}

export default function App() {
  return (
    <div className={clsx(UI, "min-h-screen w-full overflow-hidden bg-[#1c2b38] text-black")}>
      <div className="bg-[#f0f0f0]">
        <TitleBar />
        <MenuBar />
        <div className="flex h-[27px] items-center border-b border-[#a0a0a0]">
          <Grip />
          <div className="ml-[2px] flex gap-2">
            {QUICK.map((q) => (
              <button key={q.label} className="flex shrink-0 items-center gap-[3px] whitespace-nowrap text-xs">
                {q.icon}
                {q.label}
              </button>
            ))}
          </div>
        </div>
        <div className="flex h-[26px] items-center border-b border-[#a0a0a0]">
          <Grip />
          <Tools names={["week"]} />
          <Caret />
          <Tools names={["region", "clip", "wave3", "wave9", "candle"]} pressed="region" />
          <Caret />
          <Tools names={["pattern", "profile"]} pressed="pattern" />
          <Sep />
          <Tools names={["first", "last", "prev", "next", "dLeft", "dRight", "dWide", "dNarrow", "dAll", "dCross"]} />
          <Sep />
          <Tools names={["hand", "cross", "link", "hammer", "brain"]} pressed="cross" />
          <Sep />
          <Tools names={["calendar", "calc", "notes", "save", "globe", "computer"]} />
        </div>
        <div className="flex h-[26px] items-center border-b border-[#909090]">
          <DrawGroup icons={DRAW_1} label="画线" />
          <DrawGroup icons={DRAW_2} label="角度线" />
          <DrawGroup icons={DRAW_3} label="分割线" />
          <DrawGroup icons={DRAW_4} label="工具" last />
        </div>
      </div>
      <Chart />
      <div className="border-t-2 border-[#999] bg-white pt-px">
        <QuoteBar />
        <InfoBar />
      </div>
    </div>
  );
}
